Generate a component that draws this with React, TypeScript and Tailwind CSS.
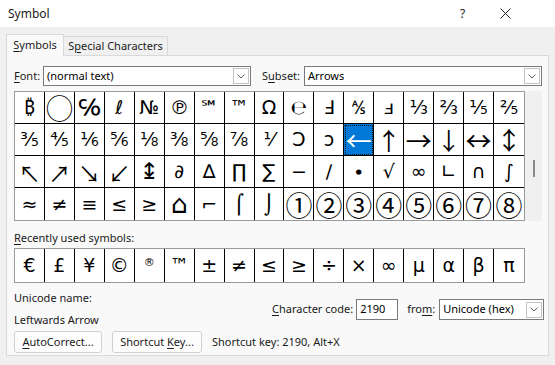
import React from "react";

const ui = { fontFamily: '"Noto Sans", "DejaVu Sans", sans-serif' };
const sym = { fontFamily: '"DejaVu Sans", "Noto Sans", sans-serif' };

const GRID: string[][] = [
  ["₿", "◯", "℅", "ℓ", "№", "℗", "℠", "™", "Ω", "℮", "Ⅎ", "⅍", "ⅎ", "⅓", "⅔", "⅕", "⅖"],
  ["⅗", "⅘", "⅙", "⅚", "⅛", "⅜", "⅝", "⅞", "⅟", "Ↄ", "ↄ", "←", "↑", "→", "↓", "↔", "↕"],
  ["↖", "↗", "↘", "↙", "↨", "∂", "∆", "∏", "∑", "−", "∕", "∙", "√", "∞", "∟", "∩", "∫"],
  ["≈", "≠", "≡", "≤", "≥", "⌂", "⌐", "⌠", "⌡", "①", "②", "③", "④", "⑤", "⑥", "⑦", "⑧"],
];

const RECENT = ["€", "£", "¥", "©", "®", "™", "±", "≠", "≤", "≥", "÷", "×", "∞", "µ", "α", "β", "π"];

// the thin arrows and circles come closer with the CJK font
const cjk = "font-['Noto_Sans_CJK_JP',sans-serif]";
const SIZE: Record<string, string> = {
  "←": `${cjk} text-[26px]`,
  "→": `${cjk} text-[26px]`,
  "↔": `${cjk} text-[26px]`,
  "↑": `${cjk} text-[24px]`,
  "↓": `${cjk} text-[24px]`,
  "↕": `${cjk} text-[25px]`,
  "↖": `${cjk} text-[22px]`,
  "↗": `${cjk} text-[22px]`,
  "↘": `${cjk} text-[22px]`,
  "↙": `${cjk} text-[22px]`,
  "↨": "text-[23px]",
  "◯": `${cjk} text-[27px]`,
  "⌂": "text-[26px]",
  "①": `${cjk} text-[27px]`,
  "②": `${cjk} text-[27px]`,
  "③": `${cjk} text-[27px]`,
  "④": `${cjk} text-[27px]`,
  "⑤": `${cjk} text-[27px]`,
  "⑥": `${cjk} text-[27px]`,
  "⑦": `${cjk} text-[27px]`,
  "⑧": `${cjk} text-[27px]`,
  "℅": "text-[22px]",
};

// label with one underlined access key
const Key = ({ text, k }: { text: string; k: number }) => (
  <span>
    {text.slice(0, k)}
    <span className="underline underline-offset-2">{text[k]}</span>
    {text.slice(k + 1)}
  </span>
);

const Chevron = () => (
  <svg width="8" height="5" viewBox="0 0 8 5">
    <path d="M0.5 0.5 L4 4 L7.5 0.5" stroke="#606060" fill="none" strokeWidth="1" />
  </svg>
);

const Dropdown = ({ value, className }: { value: string; className: string }) => (
  <div className={`flex h-[20px] items-center border border-[#7a7a7a] bg-white ${className}`}>
    <span className="flex-1 truncate pl-[3px] text-black">{value}</span>
    <span className="mr-[1px] flex h-[16px] w-[16px] items-center justify-center border border-[#c4c4c4] bg-white">
      <Chevron />
    </span>
  </div>
);

const Button = ({ children, className }: { children: React.ReactNode; className: string }) => (
  <button
    className={`flex h-[22px] items-center justify-center rounded-[3px] border border-[#d0d0d0] bg-[#fdfdfd] ${className}`}
  >
    {children}
  </button>
);

export default function App() {
  return (
    <div className="h-[365px] w-[555px] overflow-hidden bg-[#f0f0f0] text-[11px] text-[#1a1a1a]" style={ui}>
      {/* title bar */}
      <div className="flex h-[27px] items-center bg-white pl-[8px] pr-[44px]">
        <span className="flex-1 text-[12px]">Symbol</span>
        <span className="w-[40px] text-[12px]">?</span>
        <svg width="11" height="11" viewBox="0 0 11 11">
          <path d="M0.5 0.5 L10.5 10.5 M10.5 0.5 L0.5 10.5" stroke="#222" strokeWidth="1" />
        </svg>
      </div>

      <div className="px-[6px] pt-[7px]">
        {/* tabs */}
        <div className="flex items-end">
          <div className="relative z-10 -mb-[1px] flex h-[22px] w-[58px] items-center justify-center border border-b-0 border-[#d9d9d9] bg-[#f9f9f9]">
            <Key text="Symbols" k={0} />
          </div>
          <div className="flex h-[19px] w-[104px] items-center justify-center border border-b-0 border-l-0 border-[#d9d9d9] bg-[#f0f0f0]">
            <Key text="Special Characters" k={1} />
          </div>
        </div>

        {/* panel */}
        <div className="border border-[#d9d9d9] bg-[#f9f9f9] pb-[2px] pl-[7px] pr-[6px] pt-[10px]">
          <div className="flex items-center">
            <span className="w-[29px]">
              <Key text="Font:" k={0} />
            </span>
            <Dropdown value="(normal text)" className="w-[208px]" />
            <span className="ml-[11px] w-[22px]">
              <Key text="Subset:" k={1} />
            </span>
            <Dropdown value="Arrows" className="ml-[20px] flex-1" />
          </div>

          {/* symbol grid + scrollbar */}
          <div className="mt-[5px] flex">
            <div className="w-[511px] border border-[#9a9a9a] bg-white" style={sym}>
              {GRID.map((row, r) => (
                <div key={r} className="grid grid-cols-[repeat(17,1fr)]">
                  {row.map((c, i) => {
                    const sel = r === 1 && i === 11;
                    return (
                      <div
                        key={i}
                        className={`flex h-[32px] items-center justify-center overflow-hidden leading-none ${
                          SIZE[c] ?? "text-[19px]"
                        } ${i < 16 ? "border-r border-r-black" : ""} ${r < 3 ? "border-b border-b-black" : ""} ${
                          sel
                            ? "bg-[#0078d7] text-white outline outline-1 -outline-offset-2 outline-dotted outline-[#1b1b1b]"
                            : "text-black"
                        }`}
                      >
                        {c}
                      </div>
                    );
                  })}
                </div>
              ))}
            </div>
            <div className="flex w-[17px] items-center justify-center bg-[#f0f0f0]">
              <div className="mt-[24px] h-[17px] w-[2px] bg-[#8a8a8a]" />
            </div>
          </div>

          <div className="mt-[9px] h-[15px] leading-[15px]">
            <Key text="Recently used symbols:" k={0} />
          </div>
          <div
            className="mt-[3px] grid h-[35px] w-[511px] grid-cols-[repeat(17,1fr)] border border-[#9a9a9a] bg-white"
            style={sym}
          >
            {RECENT.map((c, i) => (
              <div
                key={i}
                className={`flex justify-center leading-none text-black ${
                  c === "®" ? "items-start pt-[8px] text-[11px]" : "items-center text-[19px]"
                } ${i < 16 ? "border-r border-r-black" : ""}`}
              >
                {c}
              </div>
            ))}
          </div>

          {/* unicode info */}
          <div className="mt-[7px] flex">
            <div className="w-[258px] shrink-0">
              <div className="h-[16px] leading-[16px]">Unicode name:</div>
              <div className="mt-[6px] h-[16px] leading-[16px]">Leftwards Arrow</div>
            </div>
            <div className="mt-[9px] flex h-[21px] shrink-0 items-center whitespace-nowrap">
              <Key text="Character code:" k={0} />
              <div className="ml-[3px] flex h-[21px] w-[42px] items-center border border-[#7a7a7a] bg-white pl-[3px] text-black">
                2190
              </div>
              <span className="ml-[9px]">
                <Key text="from:" k={3} />
              </span>
              <Dropdown value="Unicode (hex)" className="ml-[4px] h-[21px] w-[105px]" />
            </div>
          </div>

          <div className="mt-[3px] flex items-center">
            <Button className="w-[88px]">
              <Key text="AutoCorrect..." k={0} />
            </Button>
            <Button className="ml-[10px] w-[90px]">
              <Key text="Shortcut Key..." k={9} />
            </Button>
            <span className="ml-[10px]">Shortcut key: 2190, Alt+X</span>
          </div>
        </div>
      </div>
    </div>
  );
}
